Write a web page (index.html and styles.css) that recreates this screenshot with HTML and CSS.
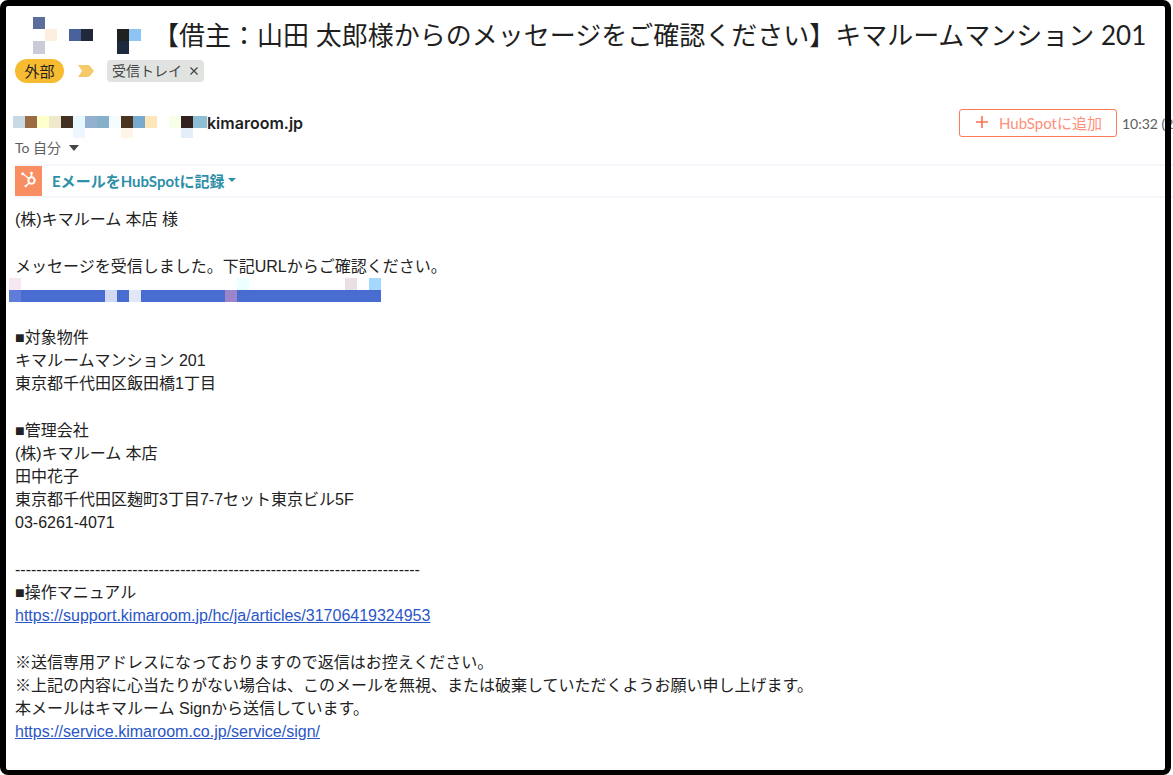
FILE: index.html
```
<!DOCTYPE html>
<html lang="ja">
<head>
  <meta charset="UTF-8" />
  <meta name="viewport" content="width=device-width, initial-scale=1" />
  <title>キマルームマンション 201</title>
  <link rel="stylesheet" href="styles.css">
</head>
<body>
  <div class="frame">
    <header>
      <div class="subject">
        <svg class="subject-mask" width="120" height="40" shape-rendering="crispEdges" aria-hidden="true">
          <rect x="12" y="2" width="12" height="12" fill="#5c6f9c"/>
          <rect x="24" y="14" width="12" height="12" fill="#fcefdf"/>
          <rect x="12" y="26" width="12" height="13" fill="#c9cbd9"/>
          <rect x="48" y="14" width="12" height="12" fill="#4a629c"/>
          <rect x="60" y="14" width="12" height="12" fill="#20283a"/>
          <rect x="96" y="14" width="12" height="12" fill="#1f2020"/>
          <rect x="108" y="14" width="12" height="12" fill="#8ec4f4"/>
          <rect x="96" y="26" width="12" height="13" fill="#1d293f"/>
        </svg>
        <h1>【借主：山田 太郎様からのメッセージをご確認ください】キマルームマンション 201</h1>
      </div>
      <div class="labels">
        <span class="external">外部</span>
        <svg class="important" width="17" height="12" viewBox="0 0 17 12" aria-hidden="true">
          <path d="M1 0h10q1 0 2 1l4 5-4 5q-1 1-2 1H1l4-6z" fill="#f5cb69"/>
        </svg>
        <span class="inbox">受信トレイ
          <button type="button" aria-label="ラベルを削除">
            <svg width="8" height="8" viewBox="0 0 8 8"><path d="M.5.5l7 7M7.5.5l-7 7" stroke="#444746" stroke-width="1.3"/></svg>
          </button>
        </span>
      </div>
    </header>

    <section class="sender">
      <div class="from">
        <div class="address">
          <svg width="194" height="22" shape-rendering="crispEdges" aria-hidden="true">
            <rect x="0" width="12" height="12" fill="#c8d8e5"/>
            <rect x="12" width="12" height="12" fill="#9b6b44"/>
            <rect x="24" width="12" height="12" fill="#ffffcc"/>
            <rect x="36" width="12" height="12" fill="#efe9cc"/>
            <rect x="48" width="12" height="12" fill="#423022"/>
            <rect x="60" width="12" height="12" fill="#e8f8ff"/>
            <rect x="72" width="12" height="12" fill="#93b0ce"/>
            <rect x="84" width="12" height="12" fill="#86afc9"/>
            <rect x="96" width="12" height="12" fill="#f5fbff"/>
            <rect x="108" width="12" height="12" fill="#4a3420"/>
            <rect x="120" width="12" height="12" fill="#78aacf"/>
            <rect x="132" width="12" height="12" fill="#ffe6b8"/>
            <rect x="156" width="12" height="12" fill="#f8ffe8"/>
            <rect x="168" width="12" height="12" fill="#32211f"/>
            <rect x="180" width="14" height="12" fill="#8ebdd6"/>
            <rect x="60" y="12" width="12" height="10" fill="#eef6ff"/>
            <rect x="108" y="12" width="12" height="10" fill="#fff4e8"/>
            <rect x="168" y="12" width="12" height="10" fill="#e3eef8"/>
          </svg>
          <strong>kimaroom.jp</strong>
        </div>
        <button type="button" class="to">To 自分
          <svg width="10" height="6" viewBox="0 0 10 6" aria-hidden="true"><path d="M0 0h10L5 6z" fill="#444746"/></svg>
        </button>
      </div>
      <div class="meta">
        <button type="button" class="add">
          <svg width="14" height="14" viewBox="0 0 14 14" aria-hidden="true"><path d="M7 1v12M1 7h12" stroke="#ff6f52" stroke-width="1.6"/></svg>
          HubSpotに追加
        </button>
        <time>10:32 (2</time>
      </div>
    </section>

    <div class="hubspot-bar">
      <svg width="27" height="30" viewBox="0 0 27 30" aria-hidden="true">
        <rect width="27" height="30" fill="#f98e62"/>
        <g fill="none" stroke="#fff" stroke-width="1.5">
          <circle cx="16.500" cy="14.500" r="3.200" stroke-width="2"/>
          <path d="M8 8l6 4.500M16.500 11V8M14 17l-3 3"/>
        </g>
        <g fill="#fff">
          <circle cx="7.700" cy="7.700" r="1.500"/>
          <circle cx="16.500" cy="7.200" r="1.400"/>
          <circle cx="10.800" cy="20" r="1.300"/>
        </g>
      </svg>
      <button type="button">EメールをHubSpotに記録
        <svg width="8" height="4" viewBox="0 0 8 4" aria-hidden="true"><path d="M0 0h8L4 4z" fill="#2e8fa8"/></svg>
      </button>
    </div>

    <main class="message">
      <p>(株)キマルーム 本店 様</p>

      <div class="block">
        <p>メッセージを受信しました。下記URLからご確認ください。</p>
        <svg class="url-mask" width="372" height="24" shape-rendering="crispEdges" aria-hidden="true">
          <rect y="12" width="372" height="12" fill="#496cd1"/>
          <rect y="12" width="12" height="12" fill="#5f7dd8"/>
          <rect x="96" y="12" width="12" height="12" fill="#d2d9f2"/>
          <rect x="120" y="12" width="12" height="12" fill="#e2e7f7"/>
          <rect x="216" y="12" width="12" height="12" fill="#9d85cc"/>
          <rect width="12" height="12" fill="#f6e8f2"/>
          <rect x="228" width="12" height="12" fill="#ebffff"/>
          <rect x="336" width="12" height="12" fill="#e9dfe5"/>
          <rect x="360" width="12" height="12" fill="#a5d8ff"/>
        </svg>
      </div>

      <div class="block">
        <p>■対象物件</p>
        <p>キマルームマンション 201</p>
        <p>東京都千代田区飯田橋1丁目</p>
      </div>

      <div class="block">
        <p>■管理会社</p>
        <p>(株)キマルーム 本店</p>
        <p>田中花子</p>
        <p>東京都千代田区麹町3丁目7-7セット東京ビル5F</p>
        <p>03-6261-4071</p>
      </div>

      <div class="block">
        <p>----------------------------------------------------------------------------</p>
        <p>■操作マニュアル</p>
        <p><a href="https://support.kimaroom.jp/hc/ja/articles/31706419324953">https://support.kimaroom.jp/hc/ja/articles/31706419324953</a></p>
      </div>

      <div class="block">
        <p>※送信専用アドレスになっておりますので返信はお控えください。</p>
        <p>※上記の内容に心当たりがない場合は、このメールを無視、または破棄していただくようお願い申し上げます。</p>
        <p>本メールはキマルーム Signから送信しています。</p>
        <p><a href="https://service.kimaroom.co.jp/service/sign/">https://service.kimaroom.co.jp/service/sign/</a></p>
      </div>
    </main>
  </div>
</body>
</html>
```
FILE: styles.css
```
* {
  margin: 0;
  padding: 0;
  box-sizing: border-box;
}

body {
  font-family: Lato, "Noto Sans CJK JP", sans-serif;
  color: #1f1f1f;
  background: #fff;
}

button {
  font-family: inherit;
  border: none;
  background: none;
  cursor: pointer;
}

svg {
  display: block;
  flex: none;
}

.frame {
  position: relative;
  min-height: 100vh;
  padding: 6px 0 5px 6px;
}

/* the border lies over the content, which runs on under its right side */
.frame::after {
  content: "";
  position: absolute;
  inset: 0 2px 0 0;
  border: 6px solid #000;
  border-bottom-width: 5px;
  border-radius: 8px;
  pointer-events: none;
}

header {
  padding: 9px 0 0 9px;
}

.subject {
  display: flex;
  gap: 12px;
  height: 41px;
}

.subject-mask {
  margin-left: 6px;
}

.subject h1 {
  font-size: 26px;
  font-weight: 400;
  line-height: 40px;
  white-space: nowrap;
}

.labels {
  display: flex;
  align-items: center;
  height: 29px;
}

.external {
  width: 49px;
  font-size: 15px;
  line-height: 24px;
  text-align: center;
  border-radius: 12px;
  background: #f6bb30;
}

.important {
  margin: 0 13px;
}

.inbox {
  display: flex;
  align-items: center;
  gap: 8px;
  padding: 0 6px 0 5px;
  font-size: 14px;
  line-height: 22px;
  color: #444746;
  border-radius: 4px;
  background: #e1e3e1;
}

.sender {
  display: flex;
  justify-content: space-between;
  align-items: flex-start;
  height: 79px;
  padding: 24px 0 0 7px;
}

.address {
  display: flex;
  align-items: center;
  height: 28px;
}

.address svg {
  margin-top: 8px;
}

.address strong {
  font-family: Inter, sans-serif;
  font-size: 16px;
  font-weight: 600;
  line-height: 28px;
}

.to {
  display: flex;
  align-items: center;
  gap: 8px;
  padding-left: 2px;
  font-size: 14px;
  line-height: 22px;
  color: #5e5e5e;
}

.meta {
  display: flex;
  align-items: center;
  gap: 5px;
}

.add {
  display: flex;
  align-items: center;
  gap: 10px;
  width: 158px;
  height: 28px;
  padding: 0 0 2px 15px;
  font-size: 15px;
  color: #ff8f7a;
  white-space: nowrap;
  border: 1px solid #ff7a59;
  border-radius: 3px;
}

.meta time {
  width: 51px;
  font-size: 14px;
  color: #5e5e5e;
  white-space: nowrap;
}

.hubspot-bar {
  display: flex;
  margin-left: 9px;
  border-top: 2px solid #f3f6fa;
  border-bottom: 2px solid #f3f6fa;
}

.hubspot-bar button {
  display: flex;
  align-items: center;
  gap: 4px;
  padding: 0 0 2px 10px;
  font-size: 15px;
  font-weight: 700;
  color: #2e8fa8;
}

.message {
  padding: 10px 0 26px 9px;
  font-family: "Liberation Sans", "Noto Sans CJK JP", sans-serif;
  font-size: 16px;
  line-height: 23px;
  color: #222;
}

.block {
  margin-top: 24px;
}

.url-mask {
  margin-left: -6px;
}

.message a {
  color: #2a56c6;
}
```
